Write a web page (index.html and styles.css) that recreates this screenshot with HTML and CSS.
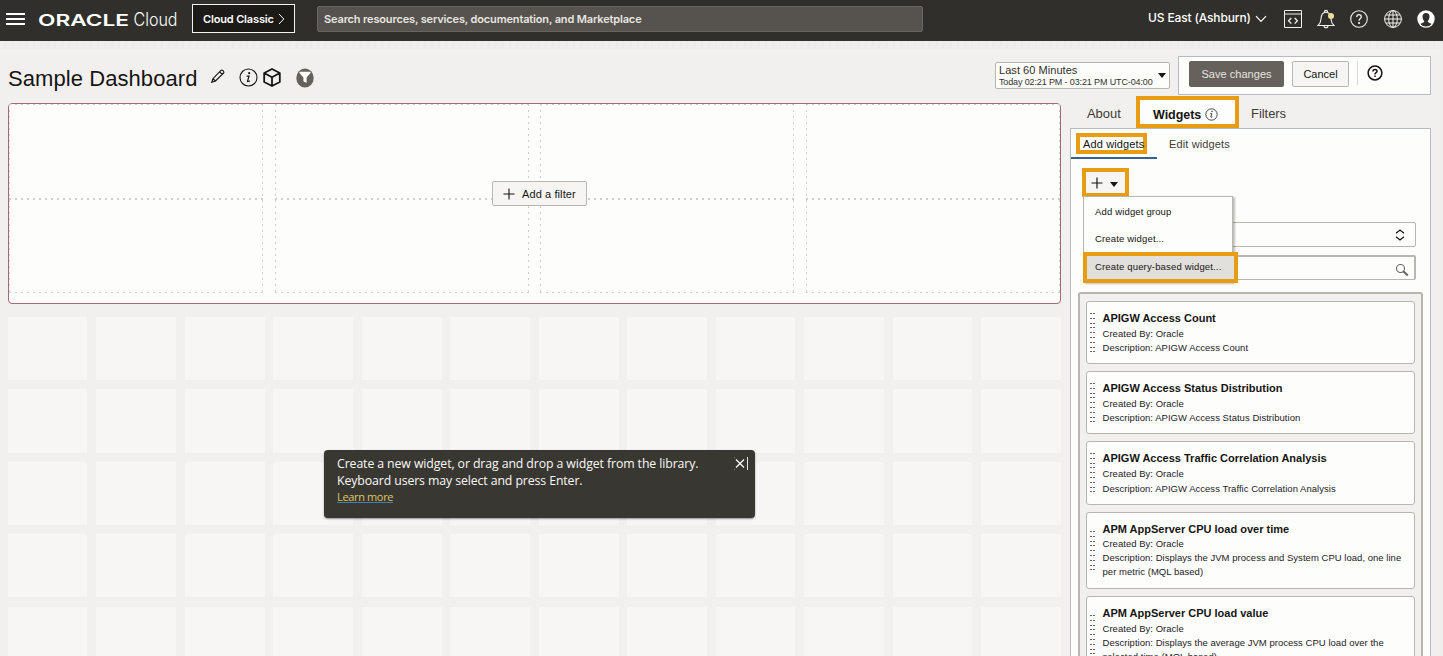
FILE: index.html
```html
<!DOCTYPE html>
<html lang="en">
<head>
<meta charset="utf-8">
<title>Sample Dashboard</title>
<link rel="stylesheet" href="styles.css">
</head>
<body>
<header class="topbar">
  <svg class="burger" width="20" height="14" viewBox="0 0 20 14"><path d="M0 2H19M0 7H19M0 12H19" stroke="#fff" stroke-width="1.9"/></svg>
  <svg class="logo" width="142" height="20" viewBox="0 0 142 20">
    <text class="logo-oracle" x="0" y="15.5" textLength="91" lengthAdjust="spacingAndGlyphs">ORACLE</text>
    <text class="logo-cloud" x="95.5" y="15.5" textLength="44" lengthAdjust="spacingAndGlyphs">Cloud</text>
  </svg>
  <div class="classic"><span>Cloud Classic</span><svg width="7" height="12" viewBox="0 0 7 12"><path d="M1 1L5.8 6L1 11" fill="none" stroke="#fff"/></svg></div>
  <div class="global-search">Search resources, services, documentation, and Marketplace</div>
  <div class="region"><span>US East (Ashburn)</span><svg width="12" height="8" viewBox="0 0 12 8"><path d="M1 1.2L6 6.3L11 1.2" fill="none" stroke="#fff" stroke-width="1.2"/></svg></div>
  <div class="top-icons">
    <svg width="18" height="18" viewBox="0 0 18 18" fill="none" stroke="#f4f3f1"><path d="M.5.5H17.5V17.5H.5ZM.5 4H17.5"/><path d="M7.3 8L4.6 10.8L7.3 13.6M10.7 8L13.4 10.8L10.7 13.6" stroke-width="1.3"/></svg>
    <svg width="18" height="20" viewBox="0 0 18 20" fill="none" stroke="#f4f3f1" stroke-width="1.1"><path d="M1 16.5H17C15 14.8 14.3 13.5 14 10C13.800 5.500 12.500 3.300 9 3.300S4.200 5.500 4 10C3.700 13.500 3 14.800 1 16.500ZM7.500 3.300V2.200Q9 .5 10.500 2.200V3.300M7 16.500Q7 18.800 9 18.800T11 16.500"/><circle cx="14" cy="7" r="3" fill="#eedf93" stroke="none"/></svg>
    <svg width="18" height="18" viewBox="0 0 18 18" fill="none" stroke="#f4f3f1" stroke-width="1.1"><circle cx="9" cy="9" r="8.3"/><path d="M6.700 7Q6.900 4.700 9 4.700T11.300 6.900C11.300 8.500 9.200 8.700 9.100 10.700" stroke-width="1.3"/><circle cx="9.100" cy="13" r=".5" fill="#fff"/></svg>
    <svg width="18" height="18" viewBox="0 0 18 18" fill="none" stroke="#f4f3f1"><circle cx="9" cy="9" r="8.400"/><ellipse cx="9" cy="9" rx="4.300" ry="8.400"/><path d="M9 .6V17.400M.6 9H17.400M2 5H16M2 13H16"/></svg>
    <svg width="18" height="18" viewBox="0 0 18 18"><circle cx="9" cy="9" r="8.700" fill="#fff"/><path d="M9 3C6.500 3 5.300 4.800 5.500 7C5.700 9 6.400 10.300 7.200 11V12L3.400 14Q5.500 16.600 9 16.600T14.600 14L10.800 12V11C11.600 10.300 12.300 9 12.500 7C12.700 4.800 11.500 3 9 3Z" fill="#312f2b"/></svg>
  </div>
</header>
<div class="strip"></div>
<main class="page">
  <section class="workspace">
    <div class="titlebar">
      <h1>Sample Dashboard</h1>
      <svg class="pencil" width="14" height="14" viewBox="0 0 14 14" fill="none" stroke="#161513" stroke-width="1.200"><path d="M.8 13.200L1.900 9.700L10 1.400Q10.900 .6 12 1.600T12.700 3.900L4.500 12ZM8.700 2.800L11.200 5.300M1.900 9.700L4.500 12"/></svg>
      <svg class="info" width="19" height="19" viewBox="0 0 19 19"><circle cx="9.500" cy="9.500" r="8.500" fill="none" stroke="#161513" stroke-width="1.100"/><circle cx="10.200" cy="5.200" r="1.100" fill="#161513"/><path d="M7.600 8.200H10L8.500 13.300Q8.600 14 10.900 12.700" fill="none" stroke="#161513" stroke-width="1.200"/></svg>
      <svg class="cube" width="18" height="19" viewBox="0 0 18 19" fill="none" stroke="#161513" stroke-width="1.800" stroke-linejoin="round"><path d="M9 1L16.800 5V14L9 18L1.200 14V5ZM1.200 5L9 9.300L16.800 5M9 9.300V18"/></svg>
      <svg class="funnel" width="18" height="20" viewBox="0 0 18 20"><ellipse cx="9" cy="10" rx="8.700" ry="9.500" fill="#66615b"/><path d="M3.500 3.700H14.500V5L10.600 9.500V15L7.400 13.200V9.500L3.500 5Z" fill="#fff"/></svg>
      <div class="timebox"><div><div class="t1">Last 60 Minutes</div><div class="t2">Today 02:21 PM - 03:21 PM UTC-04:00</div></div><i class="tri"></i></div>
    </div>
    <div class="filters">
      <div class="slot"></div><div class="slot"></div><div class="slot"></div><div class="slot"></div>
      <div class="add-filter"><svg width="12" height="12" viewBox="0 0 12 12"><path d="M6 .5V11.500M.5 6H11.500" stroke="#161513" stroke-width="1.100"/></svg><span>Add a filter</span></div>
    </div>
    <div class="canvas">
      <div class="toast">
        <p>Create a new widget, or drag and drop a widget from the library.<br>Keyboard users may select and press Enter.</p>
        <a>Learn more</a>
        <svg class="close" width="15" height="14" viewBox="0 0 15 14"><path d="M2 2.500L10 10.500M10 2.500L2 10.500" stroke="#fff" stroke-width="1.200"/><path d="M13.500 0V13" stroke="#e8e6e2"/><path d="M.5 0V13" stroke="#77756f" stroke-dasharray="1 11"/></svg>
      </div>
    </div>
  </section>
  <aside class="side">
    <div class="actions">
      <div class="btn save">Save changes</div><div class="btn cancel">Cancel</div><i class="rule"></i>
      <svg width="16" height="16" viewBox="0 0 16 16" fill="none" stroke="#161513" stroke-width="1.500"><circle cx="8" cy="8" r="6.900"/><path d="M5.900 6.500Q6 4.400 8 4.400T10.100 6.300C10.100 7.700 8 7.700 8 9.400M8 10.600V12"/></svg>
    </div>
    <nav class="tabs">
      <div class="tab about">About</div>
      <div class="tab active">Widgets<svg width="13" height="13" viewBox="0 0 19 19"><circle cx="9.500" cy="9.500" r="8.300" fill="none" stroke="#333" stroke-width="1.300"/><circle cx="10.200" cy="5.200" r="1.100" fill="#333"/><path d="M7.600 8.200H10L8.500 13.300Q8.600 14 10.900 12.700" fill="none" stroke="#333" stroke-width="1.300"/></svg></div>
      <div class="tab filt">Filters</div>
    </nav>
    <div class="panel">
      <div class="subtabs"><div class="subtab on"><span>Add widgets</span></div><div class="subtab">Edit widgets</div></div>
      <div class="tools">
        <div class="plus"><svg width="12" height="12" viewBox="0 0 12 12"><path d="M6 .5V11.500M.5 6H11.500" stroke="#161513" stroke-width="1.200"/></svg><i class="tri"></i></div>
        <div class="menu"><div>Add widget group</div><div>Create widget...</div><div class="hot">Create query-based widget...</div></div>
      </div>
      <div class="field"><svg width="10" height="12" viewBox="0 0 10 12" fill="none" stroke="#161513" stroke-width="1.300"><path d="M1 4.200L5 1L9 4.200M1 7.800L5 11L9 7.800"/></svg></div>
      <div class="field search"><svg width="14" height="14" viewBox="0 0 14 14" fill="none" stroke="#66635d"><circle cx="5.500" cy="5.500" r="4" stroke-width="1.100"/><path d="M8.300 8.300L12.800 12.500" stroke-width="2"/></svg></div>
      <div class="list">
        <article class="card"><i class="grip"></i><div><h2>APIGW Access Count</h2><p>Created By: Oracle</p><p>Description: APIGW Access Count</p></div></article>
        <article class="card"><i class="grip"></i><div><h2>APIGW Access Status Distribution</h2><p>Created By: Oracle</p><p>Description: APIGW Access Status Distribution</p></div></article>
        <article class="card"><i class="grip"></i><div><h2>APIGW Access Traffic Correlation Analysis</h2><p>Created By: Oracle</p><p>Description: APIGW Access Traffic Correlation Analysis</p></div></article>
        <article class="card tall"><i class="grip"></i><div><h2>APM AppServer CPU load over time</h2><p>Created By: Oracle</p><p>Description: Displays the JVM process and System CPU load, one line<br>per metric (MQL based)</p></div></article>
        <article class="card tall"><i class="grip"></i><div><h2>APM AppServer CPU load value</h2><p>Created By: Oracle</p><p>Description: Displays the average JVM process CPU load over the<br>selected time (MQL based)</p></div></article>
      </div>
    </div>
  </aside>
</main>
</body>
</html>
```
FILE: styles.css
```css
* { box-sizing: border-box; }
body { margin: 0; height: 656px; overflow: hidden; background: #f2f0ef; color: #161513; font-family: "Liberation Sans", Arial, sans-serif; }
h1, h2, p { margin: 0; }
svg { display: block; flex: none; }

.topbar { height: 41px; background: #312f2b; color: #fff; display: flex; align-items: flex-start; font-family: Inter, sans-serif; }
.burger { margin: 12px 0 0 6px; }
.logo { margin: 10px 0 0 12px; fill: #fff; overflow: visible; }
.logo-oracle { font: 600 16px Inter, sans-serif; }
.logo-cloud { font: 300 18px Inter, sans-serif; }
.classic { margin: 4px 0 0 12px; width: 103px; height: 29px; border: 1px solid #f4f3f1; background: #1b1a17; display: flex; align-items: center; justify-content: space-between; padding: 1px 9px 0 10px; font-size: 11px; font-weight: 600; letter-spacing: -.15px; white-space: nowrap; }
.global-search { margin: 6px 0 0 22px; width: 606px; height: 26px; border: 1px solid #68645f; border-radius: 2px; background: #56524d; padding-left: 6px; line-height: 24px; font-size: 11px; font-weight: 600; letter-spacing: -.15px; color: #e8e6e3; }
.region { margin: 9px 0 0 225px; width: 119px; display: flex; align-items: center; justify-content: space-between; font-size: 12px; font-weight: 500; letter-spacing: -.15px; line-height: 17px; white-space: nowrap; }
.region svg { margin-top: 3px; }
.top-icons { margin: 9px 0 0 17px; display: flex; gap: 15.200px; height: 20px; align-items: center; }

.strip { height: 8px; background: repeating-linear-gradient(100deg, #efeeec 0 5px, #edebe9 5px 7px); }
.page { display: flex; height: 607px; padding-left: 8px; border-right: 3px solid #efeeec; }
.workspace { width: 1162px; display: flex; flex-direction: column; flex: none; margin-right: -109px; }

.titlebar { height: 54px; flex: none; display: flex; align-items: flex-start; }
h1 { width: 190px; font-size: 22px; line-height: 26px; font-weight: 400; letter-spacing: .07px; margin-top: 17px; white-space: nowrap; }
.pencil { margin: 20px 0 0 13px; }
.info { margin: 19px 0 0 14px; }
.cube { margin: 19px 0 0 5px; }
.funnel { margin: 19px 0 0 15px; }
.timebox { margin: 13px 0 0 auto; width: 175px; height: 27px; border: 1px solid #b9b6ae; border-radius: 2px; background: #fdfdfc; display: flex; align-items: center; justify-content: space-between; padding: 0 3px; white-space: nowrap; color: #33302c; }
.t1 { font-size: 11px; line-height: 12px; padding-top: 1px; letter-spacing: .05px; }
.t2 { font-size: 9px; line-height: 13px; letter-spacing: -.13px; }
.tri { width: 0; height: 0; border: 4px solid transparent; border-top: 5px solid #161513; border-bottom: 0; flex: none; }

.filters { position: relative; flex: none; width: 1053px; height: 201px; border: 1px solid #a46a7c; border-radius: 4px; background: #fdfdfc; display: grid; grid-template-columns: repeat(4, 254px); justify-content: space-between; }
.slot { height: 189px; background:
  repeating-linear-gradient(90deg, #cfcfd2 0 2px, transparent 2px 6px) 0 0 / 100% 1px no-repeat,
  repeating-linear-gradient(90deg, #cfcfd2 0 2px, transparent 2px 6px) 0 94px / 100% 2px no-repeat,
  repeating-linear-gradient(90deg, #cfcfd2 0 2px, transparent 2px 6px) 0 188px / 100% 1px no-repeat,
  repeating-linear-gradient(#cfcfd2 0 2px, transparent 2px 6px) 0 0 / 1px 100% no-repeat,
  repeating-linear-gradient(#cfcfd2 0 2px, transparent 2px 6px) 100% 0 / 1px 100% no-repeat; }
.add-filter { position: absolute; left: 483px; top: 77px; width: 95px; height: 25px; border: 1px solid #b9b6ae; border-radius: 2px; background: #f6f5f4; display: flex; align-items: center; gap: 7px; padding-left: 10px; font-size: 11px; letter-spacing: .1px; white-space: nowrap; }

.canvas { width: 1053px; flex: 1; margin-top: 13px; display: flex; align-items: flex-start; padding: 133px 0 0 316px; background:
  repeating-linear-gradient(90deg, transparent 0 79.500px, #f2f0ef 79.500px 88.500px),
  repeating-linear-gradient(#f7f6f5 0 63.300px, #f2f0ef 63.300px 72.400px); }
.toast { position: relative; width: 431px; height: 68px; border-radius: 4px; background: #393731; box-shadow: 0 1px 2px rgba(0,0,0,.4); color: #fafaf8; padding: 5px 13px; font: 12.300px/17px "Open Sans", sans-serif; letter-spacing: -.1px; white-space: nowrap; }
.toast a { width: 56px; font-size: 11px; letter-spacing: -.35px; color: #d9c767; text-decoration: underline #4b7bab; display: block; line-height: 16px; }
.close { position: absolute; right: 6px; top: 7px; }

.side { width: 361px; margin-left: 9px; display: flex; flex-direction: column; position: relative; }
.actions { margin: 7px 0 0 108px; height: 39px; border: 1px solid #b5bac3; background: #fdfdfc; display: flex; align-items: flex-start; padding: 4px 0 0 10px; flex: none; }
.btn { height: 26px; line-height: 27px; font-size: 11px; text-align: center; border-radius: 2px; }
.save { width: 95px; background: #66615b; color: #e6e4e1; letter-spacing: .04px; }
.cancel { width: 57px; margin-left: 8px; border: 1px solid #b9b6ae; background: #f6f5f4; line-height: 25px; }
.rule { width: 1px; height: 24px; background: #dcdad7; margin: 0 9px 0 8px; }
.actions svg { margin-top: 4px; }

.tabs { display: flex; height: 33px; flex: none; padding-left: 17px; font-size: 13px; color: #3f3c37; }
.tab { line-height: 37px; letter-spacing: -.05px; }
.about { width: 49px; }
.active { margin-top: 1px; width: 103px; height: 32px; border: 4px solid #e89c12; background: #fdfdfc; color: #161513; font-weight: 700; font-size: 12.500px; line-height: 24px; display: flex; align-items: center; gap: 4px; padding: 5px 0 0 13px; }
.filt { margin-left: 12px; }
.panel { height: 528px; border: 1px solid #b5bac3; border-bottom: 0; background: #fdfdfc; display: flex; flex-direction: column; }
.subtabs { height: 30px; display: flex; flex: none; font-size: 11px; letter-spacing: .13px; color: #3f3c37; }
.subtab { line-height: 31px; padding-left: 12px; white-space: nowrap; }
.on { width: 86px; border-bottom: 2px solid #3b628d; padding: 4px 0 0 5px; color: #161513; }
.on span { display: block; width: 71px; height: 21px; border: 4px solid #e89c12; line-height: 14px; padding-left: 3px; }
.tools { height: 63px; flex: none; padding: 9px 0 0 11px; position: relative; }
.plus { width: 47px; height: 29px; border: 4px solid #e89c12; background: #f6f5f4; display: flex; align-items: center; gap: 7px; padding: 1px 0 0 5px; }
.plus .tri { margin-top: 2px; }
.menu { position: absolute; z-index: 2; left: 12px; top: 37px; width: 150px; height: 87px; border: 1px solid #b9b6ae; background: #fdfdfc; box-shadow: 2px 1px 2px rgba(0,0,0,.25); font-size: 9.500px; letter-spacing: .16px; }
.menu div { height: 27px; line-height: 29px; padding-left: 11px; white-space: nowrap; }
.menu .hot { position: relative; margin: 1px 0 0 0; left: -1px; width: 155px; height: 31px; border: 4px solid #e89c12; background: #e2e0dd; line-height: 22px; padding-left: 8px; }
.field { height: 25px; flex: none; margin: 0 14px 0 12px; border: 1px solid #b9b6ae; border-radius: 2px; display: flex; align-items: center; justify-content: flex-end; padding-right: 10px; }
.search { margin-top: 8px; border-top-width: 2px; border-right-width: 2px; padding: 4px 5px 0 0; }
.list { margin: 12px 7px 0; flex: 1; border: 2px solid #b9b6ae; border-bottom: 0; border-radius: 3px 3px 0 0; background: #f2f0ef; padding: 7px 6px 0; display: flex; flex-direction: column; gap: 7px; overflow: hidden; }
.card { height: 63.200px; flex: none; border: 1px solid #b9b6ae; border-radius: 3px; background: #fdfdfc; display: flex; align-items: flex-start; white-space: nowrap; padding-left: 3px; }
.card.tall { height: 77.500px; }
.grip { width: 6px; height: 40px; margin: 11px 6.500px 0 0; background: repeating-linear-gradient(90deg, transparent 0 2px, #fdfdfc 2px 3px, transparent 3px 5px, #fdfdfc 5px 6px), repeating-linear-gradient(#66635d 0 1px, transparent 1px 4.800px); }
.tall .grip { margin-top: 18px; }
h2 { font-size: 11px; line-height: 14px; margin: 9px 0 2px; }
.card p { font-size: 9.500px; line-height: 14.200px; letter-spacing: .03px; color: #24221f; }
.tall h2 { margin-bottom: 1.500px; }
```
